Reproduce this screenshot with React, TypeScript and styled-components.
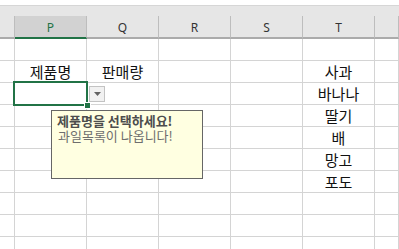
import styled, {createGlobalStyle} from 'styled-components'

const GlobalStyle = createGlobalStyle`
  body {
    margin: 0;
    background: #fff;
  }
`

const columns = ['', 'P', 'Q', 'R', 'S', 'T', '']

type Row = Record<number, string>

const rows: Row[] = [
  {},
  {1: '제품명', 2: '판매량', 5: '사과'},
  {5: '바나나'},
  {5: '딸기'},
  {5: '배'},
  {5: '망고'},
  {5: '포도'},
  {},
  {},
  {}
]

export default function App() {
  return (
    <>
      <GlobalStyle />
      <Sheet>
        <TopGap />
        <HeaderStrip />
        <HeaderRow>
          {columns.map((c, i) => (
            <HeaderCell key={i} selected={c === 'P'}>
              {c}
            </HeaderCell>
          ))}
        </HeaderRow>
        {rows.map((row, r) => (
          <GridRow key={r}>
            {columns.map((_, c) => {
              const active = r === 2 && c === 1
              return (
                <Cell key={c} active={active}>
                  {row[c]}
                  {active && (
                    <>
                      <FillHandle />
                      <DropButton>
                        <svg width="7" height="4" viewBox="0 0 7 4">
                          <path d="M0 0h7L3.5 4z" fill="#636363" />
                        </svg>
                      </DropButton>
                      <Comment>
                        <CommentTitle>제품명을 선택하세요!</CommentTitle>
                        <CommentText>과일목록이 나옵니다!</CommentText>
                      </Comment>
                    </>
                  )}
                </Cell>
              )
            })}
          </GridRow>
        ))}
      </Sheet>
    </>
  )
}

const Sheet = styled.div`
  width: 399px;
  height: 249px;
  overflow: hidden;
  position: relative;
  background: #fff;
`

const TopGap = styled.div`
  height: 5px;
  background: #fff;
  border-bottom: 1px solid #d6d6d6;
`

const HeaderStrip = styled.div`
  height: 10px;
  background: #e6e6e6;
`

const gridColumns = `15px repeat(5, 72px) 1fr`

const HeaderRow = styled.div`
  display: grid;
  grid-template-columns: ${gridColumns};
  height: 23px;
`

const HeaderCell = styled.div<{selected: boolean}>`
  display: flex;
  align-items: center;
  justify-content: center;
  background: ${({selected}) => (selected ? '#d2d2d2' : '#e6e6e6')};
  border-right: 1px solid #bdbdbd;
  border-bottom: 2px solid ${({selected}) => (selected ? '#217346' : '#ababab')};
  font-family: 'Noto Sans', 'Liberation Sans', sans-serif;
  font-size: 12px;
  color: ${({selected}) => (selected ? '#217346' : '#333')};
  padding-top: 1px;
`

const GridRow = styled.div`
  display: grid;
  grid-template-columns: ${gridColumns};
  height: 22px;
`

const Cell = styled.div<{active: boolean}>`
  position: relative;
  display: flex;
  align-items: center;
  justify-content: center;
  border-right: 1px solid #d4d4d4;
  border-bottom: 1px solid #d4d4d4;
  font-family: 'Noto Sans CJK KR', sans-serif;
  font-size: 15px;
  color: #111;
  white-space: nowrap;
  z-index: ${({active}) => (active ? 2 : 'auto')};

  ${({active}) =>
    active
      ? `
    &::after {
      content: '';
      position: absolute;
      top: -2px;
      left: -2px;
      right: -2px;
      bottom: -2px;
      border: 2px solid #217346;
    }
  `
      : ''}
`

const FillHandle = styled.span`
  position: absolute;
  right: -4px;
  bottom: -4px;
  width: 5px;
  height: 5px;
  background: #217346;
  outline: 1px solid #fff;
  z-index: 1;
`

const DropButton = styled.span`
  position: absolute;
  left: calc(100% + 3px);
  top: 3px;
  width: 16px;
  height: 16px;
  box-sizing: border-box;
  background: #f1f1f1;
  border: 1px solid #c3c3c3;
  display: flex;
  align-items: center;
  justify-content: center;
`

const Comment = styled.div`
  position: absolute;
  left: 36px;
  top: 27px;
  width: 152px;
  height: 69px;
  box-sizing: border-box;
  background: #ffffe1;
  border: 1px solid #666;
  padding: 2px 5px;
  font-family: 'Noto Sans CJK KR', sans-serif;
  font-size: 13px;
  line-height: 15px;
  text-align: left;
  display: flex;
  flex-direction: column;
  align-items: flex-start;
  justify-content: flex-start;
`

const CommentTitle = styled.span`
  font-weight: 700;
  color: #4d4d4d;
`

const CommentText = styled.span`
  color: #6e6e6e;
  padding-left: 1px;
`
